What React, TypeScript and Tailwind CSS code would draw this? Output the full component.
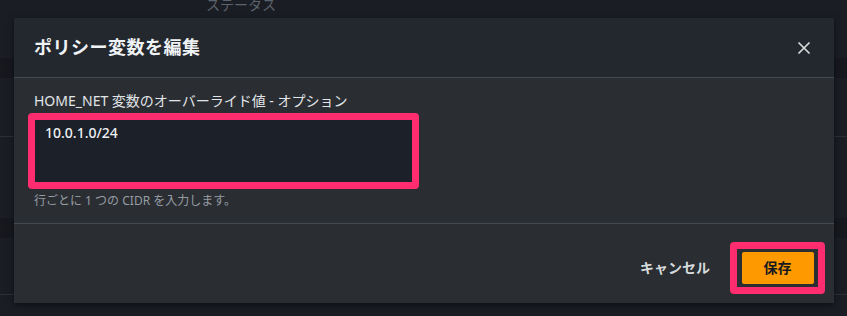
import React from "react";

const font = { fontFamily: '"Noto Sans", "Noto Sans CJK JP", sans-serif' };

export default function App() {
  return (
    <div
      className="relative w-[847px] h-[316px] overflow-hidden bg-[#1a1d24] text-[#d5dbdb]"
      style={font}
    >
      {/* background table */}
      <div className="flex flex-col">
        <div className="h-[58px] flex items-start">
          <span className="ml-[206px] -mt-[6px] text-[14px] text-[#5d636b]">ステータス</span>
        </div>
        <div className="h-[20px] bg-[#16181e]" />
        <div className="h-[59px] border-b border-[#2b2f36]" />
        <div className="h-[81px]" />
        <div className="h-[20px] bg-[#16181e]" />
        <div className="h-[57px] border-b border-[#2b2f36]" />
      </div>

      {/* modal */}
      <div className="absolute left-[14px] top-[18px] w-[820px] h-[285px] flex flex-col bg-[#2a2e33] shadow-[0_2px_6px_rgba(0,0,0,0.5)]">
        <div className="h-[60px] shrink-0 flex items-center justify-between pl-[20px] pr-[23px] bg-[#23272e] border-b border-[#434951]">
          <h2 className="text-[18px] font-bold text-[#f0f3f5] tracking-[0.5px]">ポリシー変数を編集</h2>
          <svg width="14" height="14" viewBox="0 0 14 14" className="text-[#d5dbdb]">
            <path d="M1.5 1.5 L12.5 12.5 M12.5 1.5 L1.5 12.5" stroke="currentColor" strokeWidth="1.7" />
          </svg>
        </div>

        <div className="h-[146px] shrink-0 flex flex-col pl-[20px] pt-[13px] border-b border-[#434951]">
          <label className="text-[14px] leading-[20px] text-[#e2e5e8]">
            HOME_NET 変数のオーバーライド値 - オプション
          </label>
          <div className="-ml-[6px] mt-[2px] w-[391px] h-[76px] rounded-[4px] border-[7px] border-[#ff2d6f] bg-[#1b2029]">
            <div className="pl-[10px] pt-[3px] text-[14px] leading-[20px] text-[#eef0f2] font-medium">
              10.0.1.0/24
            </div>
          </div>
          <p className="mt-[4px] text-[12px] leading-[16px] text-[#979ca3]">
            行ごとに 1 つの CIDR を入力します。
          </p>
        </div>

        <div className="flex-1 flex items-center justify-end pr-[9px] pt-[8px]">
          <span className="text-[14px] font-bold text-[#d5dbdb] mr-[20px]">キャンセル</span>
          <div className="w-[95px] h-[52px] rounded-[4px] border-[7px] border-[#ff2d6f] bg-[#2a2e33] flex items-center justify-center">
            <div className="w-[72px] h-[32px] rounded-[2px] bg-[#ff9900] flex items-center justify-center text-[14px] font-bold text-[#16191f]">
              保存
            </div>
          </div>
        </div>
      </div>
    </div>
  );
}
